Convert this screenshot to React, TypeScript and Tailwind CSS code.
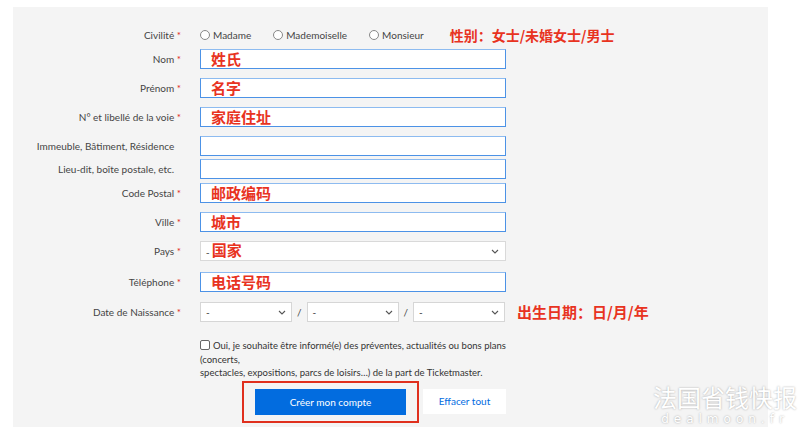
import React from 'react';

const labelFont = { fontFamily: 'Lato, "Open Sans", sans-serif' };

function Chevron() {
  return (
    <svg width="8" height="5" viewBox="0 0 8 5" className="shrink-0">
      <polyline points="1,1 4,4 7,1" fill="none" stroke="#555" strokeWidth="1.1" />
    </svg>
  );
}

function Label({ text, required }: { text: string; required?: boolean }) {
  return (
    <div className="w-[187px] shrink-0 pr-[19px] text-right text-[10px] text-[#444]">
      {text}
      {required ? <span className="text-[#e0261a]"> *</span> : <span className="invisible"> *</span>}
    </div>
  );
}

function TextInput({ value }: { value?: string }) {
  return (
    <div className="h-[20px] w-[306px] border border-[#4c92e6] border-t-[#8dbbf0] bg-white pl-[10px] text-[15px] font-bold leading-[18px] text-[#e8331f] [font-family:'Noto_Sans_CJK_SC',sans-serif]">
      {value}
    </div>
  );
}

type Row = { label: string; required?: boolean; value?: string; mt: string };

const inputRows: Row[] = [
  { label: 'Nom', required: true, value: '姓氏', mt: 'mt-[4px]' },
  { label: 'Prénom', required: true, value: '名字', mt: 'mt-[9px]' },
  { label: 'N° et libellé de la voie', required: true, value: '家庭住址', mt: 'mt-[9px]' },
  { label: 'Immeuble, Bâtiment, Résidence', mt: 'mt-[9px]' },
  { label: 'Lieu-dit, boîte postale, etc.', mt: 'mt-[3px]' },
  { label: 'Code Postal', required: true, value: '邮政编码', mt: 'mt-[4px]' },
  { label: 'Ville', required: true, value: '城市', mt: 'mt-[9px]' },
];

function DateSelect() {
  return (
    <div className="flex h-[20px] w-[92px] items-center justify-between border border-[#d6d6d6] bg-white pl-[5px] pr-[5px] text-[10px] text-[#333]">
      <span>-</span>
      <Chevron />
    </div>
  );
}

export default function App() {
  return (
    <div className="relative h-[435px] w-[800px] overflow-hidden bg-white" style={labelFont}>
      <div className="ml-[13px] mt-[7px] h-[420px] w-[755px] bg-[#f4f4f4] pt-[18px]">
        {/* Civilité */}
        <div className="flex h-[20px] items-center">
          <Label text="Civilité" required />
          <div className="flex items-center text-[10px] text-[#444]">
            <span className="mr-[3px] h-[10px] w-[10px] rounded-full border border-[#888] bg-white" />
            <span>Madame</span>
            <span className="ml-[22px] mr-[3px] h-[10px] w-[10px] rounded-full border border-[#888] bg-white" />
            <span>Mademoiselle</span>
            <span className="ml-[22px] mr-[3px] h-[10px] w-[10px] rounded-full border border-[#888] bg-white" />
            <span>Monsieur</span>
            <span className="ml-[26px] text-[14px] font-bold text-[#e8331f] [font-family:'Noto_Sans_CJK_SC',sans-serif]">
              性别：女士/未婚女士/男士
            </span>
          </div>
        </div>

        {inputRows.map(r => (
          <div key={r.label} className={`flex h-[20px] items-center ${r.mt}`}>
            <Label text={r.label} required={r.required} />
            <TextInput value={r.value} />
          </div>
        ))}

        {/* Pays */}
        <div className="mt-[9px] flex h-[20px] items-center">
          <Label text="Pays" required />
          <div className="flex h-[20px] w-[306px] items-center justify-between border border-[#d9d9d9] bg-white pl-[5px] pr-[6px]">
            <span className="text-[15px] font-bold leading-[18px] text-[#e8331f] [font-family:'Noto_Sans_CJK_SC',sans-serif]">
              <span className="text-[10px] font-normal text-[#333]">- </span>国家
            </span>
            <Chevron />
          </div>
        </div>

        {/* Téléphone */}
        <div className="mt-[11px] flex h-[20px] items-center">
          <Label text="Téléphone" required />
          <TextInput value="电话号码" />
        </div>

        {/* Date */}
        <div className="mt-[10px] flex h-[20px] items-center">
          <Label text="Date de Naissance" required />
          <DateSelect />
          <span className="mx-[5px] text-[10px] text-[#444]">/</span>
          <DateSelect />
          <span className="mx-[5px] text-[10px] text-[#444]">/</span>
          <DateSelect />
          <span className="ml-[12px] text-[15px] font-bold text-[#e8331f] [font-family:'Noto_Sans_CJK_SC',sans-serif]">
            出生日期：日/月/年
          </span>
        </div>

        {/* Newsletter */}
        <div className="mt-[17px] flex">
          <div className="w-[187px] shrink-0" />
          <p className="text-[9.5px] leading-[13.5px] text-[#333]">
            <span className="mr-[3px] inline-block h-[10px] w-[10px] translate-y-[1px] rounded-[2px] border border-[#666] bg-white" />
            Oui, je souhaite être informé(e) des préventes, actualités ou bons plans
            <br />
            (concerts,
            <br />
            spectacles, expositions, parcs de loisirs…) de la part de Ticketmaster.
          </p>
        </div>

        {/* Buttons */}
        <div className="mt-[1px] flex items-center">
          <div className="w-[229px] shrink-0" />
          <div className="border-2 border-[#e0301e] px-[11px] pb-[6px] pt-[5px]">
            <button
              type="button"
              className="h-[26px] w-[151px] bg-[#026cdf] text-[10px] text-white"
            >
              Créer mon compte
            </button>
          </div>
          <button
            type="button"
            className="ml-[4px] h-[25px] w-[83px] bg-white text-[10px] text-[#026cdf]"
          >
            Effacer tout
          </button>
        </div>
      </div>

      {/* Watermark */}
      <div className="absolute left-[650px] top-[382px] flex w-[150px] flex-col items-center whitespace-nowrap text-white [text-shadow:0_0_2px_rgba(0,0,0,0.35)]">
        <span className="text-[24px] leading-[30px] [font-family:'Noto_Sans_CJK_SC',sans-serif]">法国省钱快报</span>
        <span className="text-[12px] leading-[15px] tracking-[5px] [font-family:'DejaVu_Sans',sans-serif]">dealmoon.fr</span>
      </div>
    </div>
  );
}
